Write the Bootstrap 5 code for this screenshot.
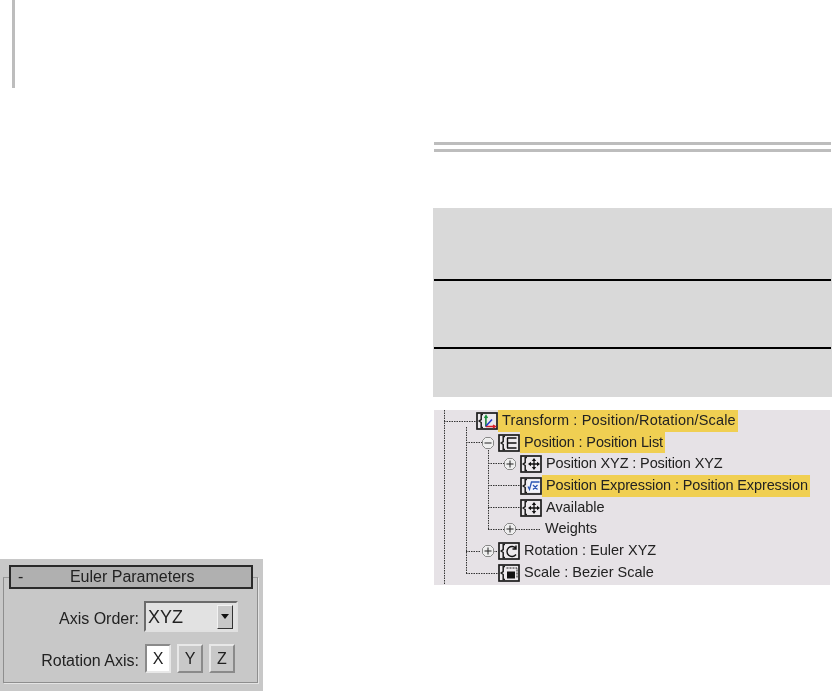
<!DOCTYPE html>
<html lang="en">
<head>
  <meta charset="UTF-8">
  <title>Euler Parameters</title>
  <link href="https://cdn.jsdelivr.net/npm/bootstrap@5.3.2/dist/css/bootstrap.min.css" rel="stylesheet">
  <style>
    body { background: #fff; font-family: "Liberation Sans", Arial, sans-serif; overflow: hidden; }
    .page-wrap { height: 691px; width: 832px; }
    .left-col { width: 433px; }
    .right-col { width: 399px; padding-top: 142px; }
    .side-bar { width: 3px; height: 88px; margin-left: 12px; background: #bdbdbd; }

    /* rollout */
    .rollout { width: 263px; height: 132px; background: #c8c8c8; padding: 6px 10px 0 9px; position: relative; color: #222; font-size: 16px; filter: blur(.4px); }
    .rollout-frame { position: absolute; left: 3px; right: 5px; top: 18px; bottom: 8px; border: 1px solid #8e8e8e; border-top-color: #9a9a9a; box-shadow: 1px 1px 0 #e4e4e4; }
    .rollout-head { position: relative; height: 24px; border: 2px solid #2a2a2a; background: #b0b0b0; padding: 0 0 0 7px; line-height: 20px; }
    .rollout-head span:last-child { flex-grow: 1; text-align: center; padding-right: 10px; }
    .form-line { position: relative; }
    .form-label-x { width: 130px; text-align: right; padding-top: 4px; }
    .line-axis { margin-top: 12px; }
    .line-rot { margin-top: 12px; }
    .axis-select { width: 94px; height: 31px; margin-left: 5px; background: #e2e2e2; border: 2px solid; border-color: #6b6b6b #e0e0e0 #e0e0e0 #6b6b6b; padding: 0 3px 0 2px; font-size: 18px; line-height: 1; }
    .axis-arrow { width: 16px; height: 24px; background: #c8c8c8; border: 1px solid; border-color: #f2f2f2 #333 #333 #f2f2f2; }
    .axis-arrow i { display: block; border: 4px solid transparent; border-top: 5px solid #111; border-bottom: 0; }
    .axis-btns { margin-left: 6px; gap: 6px; }
    .axis-btn { width: 26px; height: 29px; border: 2px solid; border-color: #e8e8e8 #8a8a8a #8a8a8a #e8e8e8; font-size: 16px; }
    .axis-btn.on { background: #fff; border-color: #8a8a8a #e8e8e8 #e8e8e8 #8a8a8a; }

    /* rules + grey block */
    .rule-double { height: 10px; margin: 0 1px 56px; border-top: 3px solid #bdbdbd; border-bottom: 3px solid #bdbdbd; }
    .grey-block { background: #d9d9d9; }
    .grey-row-a { height: 71px; }
    .grey-row-b { height: 66px; }
    .grey-row-c { height: 48px; }
    .grey-sep { height: 2px; margin: 0 1px; background: #000; }

    /* tree */
    .tree { position: relative; height: 175px; margin: 13px 2px 0 1px; background: #e6e2e6; color: #222; font-size: 14.5px; filter: blur(.35px); }
    .tree-lines { position: absolute; left: 0; top: 0; }
    .tree-row { position: relative; height: 21.7px; }
    .lvl-1 { padding-left: 42px; }
    .lvl-2 { padding-left: 64px; }
    .lvl-3 { padding-left: 86px; }
    .tree-ico { width: 22px; height: 18px; flex: none; }
    .tree-txt { padding: 0 2px 0 4px; line-height: 21.7px; white-space: nowrap; }
    .tree-txt.hl { background: #f0cf52; }
    .tree-wide { letter-spacing: .18px; }
    .tree-tight { letter-spacing: -.12px; }
    .tree-gap { margin-left: 21px; }
    .expander { position: absolute; }
    .exp-a { left: 47px; }
    .exp-b { left: 69px; }
  </style>
</head>
<body>
  <svg width="0" height="0" class="d-block">
    <defs>
      <symbol id="brk" viewBox="0 0 22 18">
        <rect x="1" y="1" width="20" height="16" fill="#ece9ec" stroke="#1c1c1c" stroke-width="1.700"/>
        <path d="M7 2.500H5.200V7.500L3.200 9 5.200 10.500V15.500H7" fill="none" stroke="#1c1c1c" stroke-width="1.500"/>
      </symbol>
      <symbol id="plusmark" viewBox="0 0 14 14">
        <path d="M4.500 1.500h5l3 3v5l-3 3h-5l-3-3v-5z" fill="#eee" stroke="#888"/>
        <path d="M3.500 7h7M7 3.500v7" stroke="#222"/>
      </symbol>
      <symbol id="minusmark" viewBox="0 0 14 14">
        <path d="M4.500 1.500h5l3 3v5l-3 3h-5l-3-3v-5z" fill="#eee" stroke="#888"/>
        <path d="M3.500 7h7" stroke="#222"/>
      </symbol>
      <symbol id="moveicon" viewBox="0 0 22 18">
        <use href="#brk"/>
        <path d="M14 4.500v9M9.500 9h9" stroke="#111" stroke-width="1.300"/>
        <path d="M11.800 6 14 3l2.200 3zM11.800 12 14 15l2.200-3zM11 6.800 8 9l3 2.200zM17 6.800 20 9l-3 2.200z" fill="#111"/>
      </symbol>
    </defs>
  </svg>

  <div class="page-wrap d-flex">
    <div class="left-col d-flex flex-column justify-content-between">
      <div class="side-bar"></div>
      <div class="rollout">
        <div class="rollout-frame"></div>
        <div class="rollout-head d-flex"><span>-</span><span>Euler Parameters</span></div>
        <div class="form-line line-axis d-flex align-items-center">
          <div class="form-label-x">Axis Order:</div>
          <div class="axis-select d-flex align-items-center justify-content-between">
            <span>XYZ</span>
            <span class="axis-arrow d-flex align-items-center justify-content-center"><i></i></span>
          </div>
        </div>
        <div class="form-line line-rot d-flex align-items-center">
          <div class="form-label-x">Rotation Axis:</div>
          <div class="axis-btns d-flex">
            <div class="axis-btn on d-flex align-items-center justify-content-center">X</div>
            <div class="axis-btn d-flex align-items-center justify-content-center">Y</div>
            <div class="axis-btn d-flex align-items-center justify-content-center">Z</div>
          </div>
        </div>
      </div>
    </div>

    <div class="right-col">
      <div class="rule-double"></div>
      <div class="grey-block">
        <div class="grey-row-a"></div>
        <div class="grey-sep"></div>
        <div class="grey-row-b"></div>
        <div class="grey-sep"></div>
        <div class="grey-row-c"></div>
      </div>

      <div class="tree">
        <svg class="tree-lines" width="396" height="175" fill="none" stroke="#333" stroke-dasharray="1.500 1">
          <path d="M10.500 0V175M32.500 17V163.500M54.500 40V119.500"/>
          <path d="M10 11.500H42M32 32.500H48M54 53.500H70M54 75.500H86M54 97.500H86M54 119.500H70M82 119.500H107M32 141.500H47M59 141.500H64M32 163.500H64"/>
        </svg>

        <div class="tree-row lvl-1 d-flex align-items-center">
          <svg class="tree-ico"><use href="#brk"/><path d="M9.500 14.500H19M9.500 14.500V4" stroke="#111" stroke-width=".6"/><path d="M10 14V4M8.500 6 10 3.500 11.500 6" stroke="#17913a" stroke-width="1.400" fill="none"/><path d="M10 14.500H19M17 13l2.500 1.500L17 16" stroke="#d81f26" stroke-width="1.400" fill="none"/><path d="M10 14 16 7.500" stroke="#2338c8" stroke-width="1.500"/></svg>
          <span class="tree-txt hl tree-wide">Transform : Position/Rotation/Scale</span>
        </div>
        <div class="tree-row lvl-2 d-flex align-items-center">
          <svg class="expander exp-a" width="14" height="14"><use href="#minusmark"/></svg>
          <svg class="tree-ico"><use href="#brk"/><path d="M9.500 4v10M9 4h9.500M9 9h9.500M9 14h9.500" stroke="#111" stroke-width="1.400" fill="none"/></svg>
          <span class="tree-txt hl tree-tight">Position : Position List</span>
        </div>
        <div class="tree-row lvl-3 d-flex align-items-center">
          <svg class="expander exp-b" width="14" height="14"><use href="#plusmark"/></svg>
          <svg class="tree-ico"><use href="#moveicon"/></svg>
          <span class="tree-txt tree-tight">Position XYZ : Position XYZ</span>
        </div>
        <div class="tree-row lvl-3 d-flex align-items-center">
          <svg class="tree-ico"><use href="#brk"/><rect x="7.500" y="3" width="12.500" height="12" fill="#f2f5fb"/><path d="M8 9.500l1.500 3L11.500 5h8M13 8l4.500 4.500M17.500 8 13 12.500" stroke="#2a55b5" stroke-width="1.300" fill="none"/></svg>
          <span class="tree-txt hl tree-tight">Position Expression : Position Expression</span>
        </div>
        <div class="tree-row lvl-3 d-flex align-items-center">
          <svg class="tree-ico"><use href="#moveicon"/></svg>
          <span class="tree-txt">Available</span>
        </div>
        <div class="tree-row lvl-3 d-flex align-items-center">
          <svg class="expander exp-b" width="14" height="14"><use href="#plusmark"/></svg>
          <span class="tree-txt tree-gap">Weights</span>
        </div>
        <div class="tree-row lvl-2 d-flex align-items-center">
          <svg class="expander exp-a" width="14" height="14"><use href="#plusmark"/></svg>
          <svg class="tree-ico"><use href="#brk"/><path d="M18 6.500A5 5 0 1 0 18 12.500M18 3.500V7H14.500" stroke="#111" stroke-width="1.400" fill="none"/></svg>
          <span class="tree-txt">Rotation : Euler XYZ</span>
        </div>
        <div class="tree-row lvl-2 d-flex align-items-center">
          <svg class="tree-ico"><use href="#brk"/><rect x="9" y="7.500" width="8" height="7" fill="#111"/><path d="M8.500 4h10.500v10" stroke="#222" stroke-dasharray="2 1" fill="none"/></svg>
          <span class="tree-txt">Scale : Bezier Scale</span>
        </div>
      </div>
    </div>
  </div>

  <script src="https://cdn.jsdelivr.net/npm/bootstrap@5.3.2/dist/js/bootstrap.bundle.min.js"></script>
</body>
</html>
